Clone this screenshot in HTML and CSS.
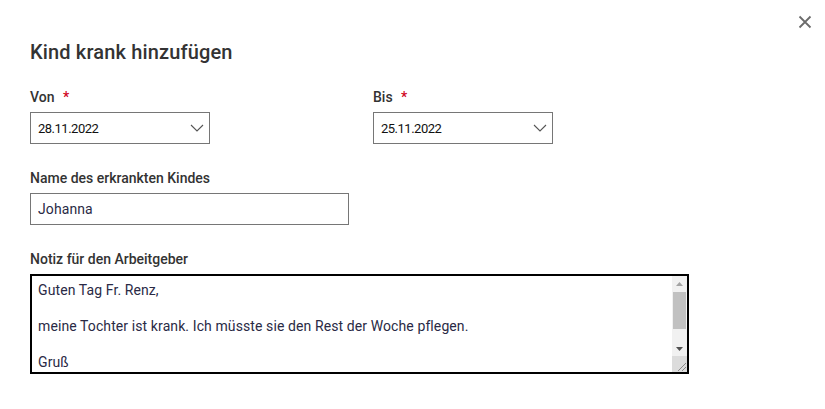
FILE: index.html
```html
<!DOCTYPE html>
<html lang="de">
<head>
<meta charset="utf-8">
<title>Kind krank hinzufügen</title>
<link rel="stylesheet" href="styles.css">
</head>
<body>
<div class="dialog">
  <button class="close" aria-label="Schließen">
    <svg width="14" height="14" viewBox="0 0 14 14"><path d="M1.5 1.5L12.5 12.5M12.5 1.5L1.5 12.5" stroke="#6b6b6b" stroke-width="1.8" fill="none"/></svg>
  </button>
  <h1 class="title">Kind krank hinzufügen</h1>
  <div class="row">
    <div class="field">
      <label class="label">Von <span class="req">*</span></label>
      <div class="select">
        <span class="select-value">28.11.2022</span>
        <svg class="chevron" width="14" height="8" viewBox="0 0 14 8"><path d="M1 1L7 7L13 1" stroke="#555" stroke-width="1.1" fill="none"/></svg>
      </div>
    </div>
    <div class="field">
      <label class="label">Bis <span class="req">*</span></label>
      <div class="select">
        <span class="select-value">25.11.2022</span>
        <svg class="chevron" width="14" height="8" viewBox="0 0 14 8"><path d="M1 1L7 7L13 1" stroke="#555" stroke-width="1.1" fill="none"/></svg>
      </div>
    </div>
  </div>
  <div class="field">
    <label class="label" for="name">Name des erkrankten Kindes</label>
    <input id="name" class="input" type="text" value="Johanna">
  </div>
  <div class="field">
    <label class="label" for="note">Notiz für den Arbeitgeber</label>
    <div class="note-box">
      <textarea id="note" class="textarea">Guten Tag Fr. Renz,

meine Tochter ist krank. Ich müsste sie den Rest der Woche pflegen.

Gruß
Sabine Müller</textarea>
      <div class="scrollbar">
        <div class="sb-btn">
          <svg width="7" height="4" viewBox="0 0 7 4"><path d="M0 4L3.5 0L7 4Z" fill="#a3a3a3"/></svg>
        </div>
        <div class="sb-track"><div class="sb-thumb"></div></div>
        <div class="sb-btn">
          <svg width="7" height="4" viewBox="0 0 7 4"><path d="M0 0L7 0L3.5 4Z" fill="#505050"/></svg>
        </div>
        <div class="sb-resizer">
          <svg width="15" height="16" viewBox="0 0 15 16"><path d="M14 7L6 15M14 11L10 15" stroke="#8a8a8a" stroke-width="1" fill="none"/></svg>
        </div>
      </div>
    </div>
  </div>
</div>
</body>
</html>
```

FILE: styles.css
```css
* { box-sizing: border-box; }
html, body { margin: 0; background: #fff; }
body {
  font-family: Roboto, "Noto Sans", sans-serif;
  color: #2a2a35;
}
.dialog {
  position: relative;
  padding: 40px 30px 0 30px;
  display: flex;
  flex-direction: column;
  gap: 25px;
}
.close {
  position: absolute;
  top: 15px;
  right: 13px;
  width: 14px;
  height: 14px;
  padding: 0;
  border: 0;
  background: none;
  display: flex;
}
.title {
  margin: 0 0 -1px 0;
  font-size: 20px;
  line-height: 24px;
  font-weight: 500;
  letter-spacing: 0.15px;
  color: #333;
}
.row {
  display: grid;
  grid-template-columns: 343px 343px;
}
.field {
  display: flex;
  flex-direction: column;
  gap: 6px;
  align-items: flex-start;
}
.label {
  font-size: 14px;
  line-height: 18px;
  font-weight: 500;
  color: #333;
}
.req {
  color: #d0021b;
  margin-left: 5px;
}
.select {
  width: 180px;
  height: 32px;
  border: 1px solid #767676;
  display: flex;
  align-items: center;
  justify-content: space-between;
  padding: 0 5px 0 7px;
}
.select-value {
  font-family: Roboto, sans-serif;
  font-size: 13px;
  letter-spacing: -0.5px;
  color: #111;
}
.input {
  width: 319px;
  height: 32px;
  border: 1px solid #767676;
  padding: 0 7px;
  font: inherit;
  font-size: 14px;
  letter-spacing: 0.1px;
  color: #2a2a45;
  outline: none;
}
.note-box {
  width: 659px;
  height: 100px;
  border: 2px solid #000;
  display: flex;
}
.textarea {
  flex: 1;
  height: 100%;
  border: 0;
  padding: 5px 6px 0 6px;
  font: inherit;
  font-size: 14px;
  line-height: 18px;
  letter-spacing: 0.1px;
  color: #2a2a45;
  resize: none;
  outline: none;
  overflow: hidden;
}
.scrollbar {
  width: 15px;
  background: #f1f1f1;
  display: flex;
  flex-direction: column;
}
.sb-btn {
  height: 15px;
  display: flex;
  align-items: center;
  justify-content: center;
}
.sb-track {
  flex: 1;
  padding: 1px 1px 0 1px;
}
.sb-thumb {
  height: 37px;
  background: #c1c1c1;
}
.sb-resizer {
  height: 16px;
  background: #dcdcdc;
  display: flex;
}
```
